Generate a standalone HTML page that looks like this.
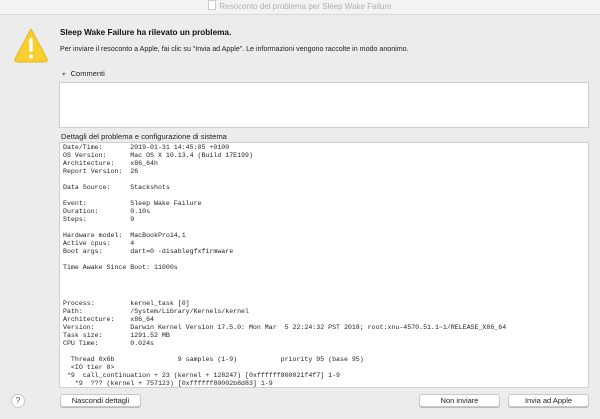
<!DOCTYPE html>
<html><head><meta charset="utf-8"><style>
body{margin:0;width:600px;height:419px;background:#ececec;font-family:"Liberation Sans",sans-serif;position:relative;overflow:hidden}
.tb{position:absolute;left:0;top:0;width:600px;height:14px;background:#f3f3f3;border-bottom:1px solid #d8d8d8;text-align:center;font-size:8px;color:#b0b0b0;line-height:14px}
.a{position:absolute;white-space:pre}
.box{position:absolute;background:#fff;border:1px solid #cfcfcf}
pre{margin:0;font-family:"Liberation Mono",monospace;font-size:6.6px;line-height:8px;color:#222;position:absolute}
.btn{position:absolute;height:11px;background:#fff;border:1px solid #c8c8c8;border-radius:3px;font-size:7.5px;line-height:11px;text-align:center;color:#222;box-shadow:0 1px 0 #bbb}
</style></head><body>
<div class="tb"><span style="display:inline-block;width:6px;height:8px;border:1px solid #ccc;vertical-align:-1px;margin-right:3px;background:#fff"></span>Resoconto del problema per Sleep Wake Failure</div>
<svg style="position:absolute;left:13px;top:27px" width="36" height="36" viewBox="0 0 36 36"><path d="M18 2 L34 32 Q35 35 31 35 L5 35 Q1 35 2 32 Z" fill="#f8cf2e" stroke="#e2b41c" stroke-width="1" stroke-linejoin="round"/><rect x="16.3" y="11" width="3.4" height="14" rx="1.7" fill="#fff"/><circle cx="18" cy="29.5" r="2" fill="#fff"/></svg>
<div class="a" style="left:60px;top:28px;font-size:8.2px;font-weight:bold;color:#111">Sleep Wake Failure ha rilevato un problema.</div>
<div class="a" style="left:60px;top:45px;font-size:7.1px;color:#222">Per inviare il resoconto a Apple, fai clic su “Invia ad Apple”. Le informazioni vengono raccolte in modo anonimo.</div>
<div class="a" style="left:61px;top:69px;font-size:7.5px;color:#222"><span style="font-size:5.5px;color:#777">▼</span>  Commenti</div>
<div class="box" style="left:59px;top:82px;width:528px;height:44px"></div>
<div class="a" style="left:61px;top:132px;font-size:7.6px;color:#222">Dettagli del problema e configurazione di sistema</div>
<div class="box" style="left:59px;top:142px;width:528px;height:244px"></div>
<pre style="left:63px;top:144px">Date/Time:       2019-01-31 14:45:05 +0100
OS Version:      Mac OS X 10.13.4 (Build 17E199)
Architecture:    x86_64h
Report Version:  26

Data Source:     Stackshots

Event:           Sleep Wake Failure
Duration:        0.10s
Steps:           9

Hardware model:  MacBookPro14,1
Active cpus:     4
Boot args:       dart=0 -disablegfxfirmware

Time Awake Since Boot: 11000s</pre>
<pre style="left:63px;top:300px">Process:         kernel_task [0]
Path:            /System/Library/Kernels/kernel
Architecture:    x86_64
Version:         Darwin Kernel Version 17.5.0: Mon Mar  5 22:24:32 PST 2018; root:xnu-4570.51.1~1/RELEASE_X86_64
Task size:       1291.52 MB
CPU Time:        0.024s

  Thread 0x6b                9 samples (1-9)           priority 95 (base 95)
  &lt;IO tier 0&gt;
 *9  call_continuation + 23 (kernel + 128247) [0xffffff800021f4f7] 1-9
   *9  ??? (kernel + 757123) [0xffffff80002b8d83] 1-9</pre>
<div style="position:absolute;left:11px;top:394px;width:12px;height:12px;border-radius:50%;background:#fff;border:1px solid #c8c8c8;font-size:8px;text-align:center;line-height:12px;color:#444">?</div>
<div class="btn" style="left:60px;top:394px;width:79px">Nascondi dettagli</div>
<div class="btn" style="left:419px;top:394px;width:79px">Non inviare</div>
<div class="btn" style="left:508px;top:394px;width:79px">Invia ad Apple</div>
</body></html>
